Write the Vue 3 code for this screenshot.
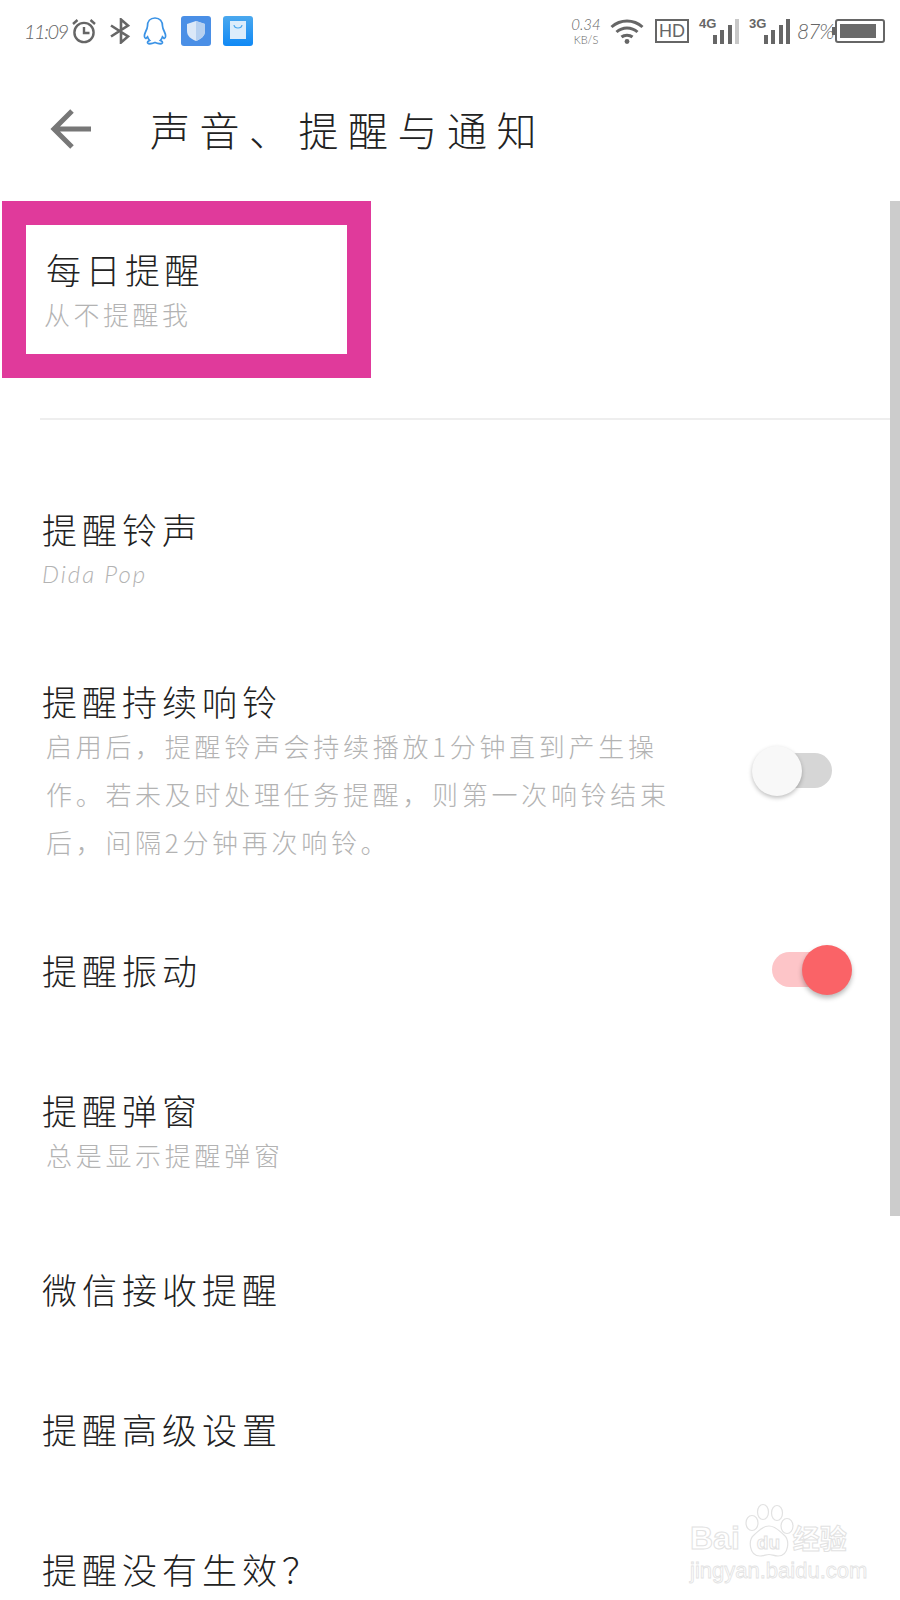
<script setup>
const descLines = [
  '启用后，提醒铃声会持续播放1分钟直到产生操',
  '作。若未及时处理任务提醒，则第一次响铃结束',
  '后，间隔2分钟再次响铃。'
]
</script>

<template>
  <div class="page">
    <header class="status">
      <div class="status-left">
        <span class="time">11:09</span>
        <svg class="i-alarm" width="26" height="26" viewBox="0 0 26 26" fill="none" stroke="#666" stroke-width="2.4">
          <circle cx="13" cy="14.5" r="9.6" />
          <path d="M13 9v6h5.5M2 6l4.5-4M24 6l-4.5-4" />
        </svg>
        <svg class="i-bt" width="21" height="26" viewBox="0 0 21 26" fill="none" stroke="#666" stroke-width="2.6">
          <path d="M1 7.5l17 11-7 6V1.500l7 6-17 11" />
        </svg>
        <svg class="i-qq" width="26" height="30" viewBox="0 0 26 30" fill="none" stroke="#3b93e6" stroke-width="1.7">
          <path d="M13 2c-5 0-7.500 3.500-7.500 8 0 2-.5 3-2 6-1.500 3-1.500 6 .3 6.500l1.700-1.700c.4 1.500 1.200 2.700 2.200 3.700-1.700.6-2.500 1.500-2 2.500.7 1 4 .9 7.300-.5 3.300 1.400 6.600 1.500 7.300.5.500-1-.3-1.900-2-2.500 1-1 1.800-2.200 2.200-3.700l1.700 1.700c1.800-.5 1.800-3.500.3-6.500-1.500-3-2-4-2-6 0-4.500-2.500-8-7.500-8z" />
        </svg>
        <svg class="i-tile" width="30" height="30" viewBox="0 0 30 30">
          <rect width="30" height="30" rx="3" fill="#4a8fe6" />
          <path d="M15 5l9 3v7c0 5-4 8-9 10-5-2-9-5-9-10V8z" fill="#dbe8f8" />
          <path d="M15 5l9 3v7c0 5-4 8-9 10z" fill="#b6d0f0" />
        </svg>
        <svg class="i-tile" width="30" height="30" viewBox="0 0 30 30">
          <defs>
            <linearGradient id="bagBg" x1="0" y1="0" x2="0" y2="1">
              <stop offset="0" stop-color="#4aa8ee" />
              <stop offset="1" stop-color="#1089f5" />
            </linearGradient>
          </defs>
          <rect width="30" height="30" rx="3" fill="url(#bagBg)" />
          <path d="M7 5h16v18H7z" fill="#dcedfb" />
          <path d="M11 9c.5 4 7.500 4 8 0" fill="none" stroke="#4aa8ee" stroke-width="1.200" />
        </svg>
      </div>
      <div class="status-right">
        <div class="speed"><span class="speed-a">0.34</span><span class="speed-b">KB/S</span></div>
        <svg class="i-wifi" width="34" height="25" viewBox="0 0 34 25" fill="none" stroke="#666" stroke-width="3">
          <path d="M1.500 8c9-8 22-8 31 0M6.500 13c6-5.500 15-5.500 21 0M11.500 18c3-2.500 8-2.500 11 0" />
          <circle cx="17" cy="22.500" r="2.400" fill="#666" stroke="none" />
        </svg>
        <span class="hd">HD</span>
        <div class="net">
          <span class="net-label">4G</span>
          <div class="bars">
            <i class="bar b1"></i><i class="bar b2"></i><i class="bar b3"></i><i class="bar b4 dim"></i>
          </div>
        </div>
        <div class="net net-3g">
          <span class="net-label">3G</span>
          <div class="bars">
            <i class="bar b1"></i><i class="bar b2"></i><i class="bar b3"></i><i class="bar b4"></i>
          </div>
        </div>
        <span class="pct">87%</span>
        <div class="battery"><div class="battery-fill"></div></div>
      </div>
    </header>

    <div class="toolbar">
      <svg width="42" height="42" viewBox="0 0 42 42" fill="none" stroke="#777" stroke-width="5">
        <path d="M41 21H4M22 3L4 21l18 18" />
      </svg>
      <h1 class="page-title">声音、提醒与通知</h1>
    </div>

    <main class="list">
      <section class="daily">
        <div class="row-text daily-text">
          <div class="title title-wide">每日提醒</div>
          <div class="sub sub-wide">从不提醒我</div>
        </div>
        <div class="highlight"></div>
        <div class="divider"></div>
      </section>

      <section class="row gap-ring">
        <div class="row-text">
          <div class="title">提醒铃声</div>
          <div class="sub latin">Dida Pop</div>
        </div>
      </section>

      <section class="row gap-keep">
        <div class="row-text">
          <div class="title">提醒持续响铃</div>
          <div v-for="line in descLines" :key="line" class="sub desc">{{ line }}</div>
        </div>
        <div class="toggle off"><div class="track"></div><div class="knob"></div></div>
      </section>

      <section class="row gap-vibrate">
        <div class="row-text">
          <div class="title">提醒振动</div>
        </div>
        <div class="toggle on"><div class="track"></div><div class="knob"></div></div>
      </section>

      <section class="row gap-popup">
        <div class="row-text">
          <div class="title">提醒弹窗</div>
          <div class="sub desc">总是显示提醒弹窗</div>
        </div>
      </section>

      <section class="row gap-wechat">
        <div class="title">微信接收提醒</div>
      </section>

      <section class="row gap-advanced">
        <div class="title">提醒高级设置</div>
      </section>

      <section class="row gap-help">
        <div class="title">提醒没有生效？</div>
      </section>

      <div class="scrollbar"></div>
    </main>

    <div class="watermark">
      <svg class="paw" width="50" height="56" viewBox="0 0 50 56" fill="#fff" stroke="#e2e2e2" stroke-width="1.200">
        <ellipse cx="7" cy="20" rx="6" ry="7.500" />
        <ellipse cx="18" cy="9" rx="5.500" ry="7.500" />
        <ellipse cx="32" cy="10" rx="5.500" ry="7.500" />
        <ellipse cx="42" cy="23" rx="6" ry="7.500" />
        <path d="M24 23c7 0 10 5 15 9 6 5 5 21-6 21-4 0-6-1.500-9-1.500s-5 1.500-9 1.500C4 53 3 37 9 32c5-4 8-9 15-9z" />
      </svg>
      <div class="wm-main"><span>Bai</span><span class="wm-du">du</span><span class="wm-cn">经验</span></div>
      <div class="wm-url">jingyan.baidu.com</div>
    </div>
  </div>
</template>

<style scoped>
.page {
  position: relative;
  width: 900px;
  height: 1600px;
  overflow: hidden;
  background: #fff;
  font-family: "Noto Sans CJK SC", "Noto Sans", sans-serif;
  color: #222;
}

/* status bar */
.status {
  height: 62px;
  display: flex;
  justify-content: space-between;
  align-items: center;
  padding: 0 15px 0 24px;
  box-sizing: border-box;
}
.status-left,
.status-right {
  display: flex;
  align-items: center;
}
.time {
  font-family: Lato, sans-serif;
  font-size: 20px;
  font-weight: 300;
  font-style: italic;
  letter-spacing: -1.500px;
  color: #666;
  width: 47px;
  white-space: nowrap;
}
.i-bt { margin-left: 13px; }
.i-qq { margin-left: 11px; }
.i-tile { margin-left: 13px; }
.i-tile + .i-tile { margin-left: 12px; }
.speed {
  display: flex;
  flex-direction: column;
  align-items: center;
  width: 30px;
  font-family: Lato, sans-serif;
  color: #666;
  font-weight: 300;
}
.speed-a { font-size: 15px; line-height: 17px; font-style: italic; }
.speed-b { font-size: 11px; line-height: 13px; }
.i-wifi { margin-left: 9px; }
.hd {
  margin-left: 11px;
  width: 34px;
  height: 24px;
  box-sizing: border-box;
  border: 2px solid #666;
  font: 400 18px/20px "Liberation Sans", sans-serif;
  color: #666;
  text-align: center;
}
.net {
  position: relative;
  margin-left: 10px;
  width: 40px;
  height: 25px;
}
.net-3g { width: 41px; }
.net-label {
  position: absolute;
  left: 0;
  top: -2px;
  font: 700 13px/14px "Liberation Sans", sans-serif;
  color: #666;
}
.bars {
  position: absolute;
  right: 0;
  bottom: 0;
  display: flex;
  align-items: flex-end;
  gap: 3.500px;
}
.bar { display: block; width: 4px; background: #666; }
.b1 { height: 9px; }
.b2 { height: 14px; }
.b3 { height: 19px; }
.b4 { height: 25px; }
.dim { background: #c8c8c8; }
.pct {
  margin-left: 7px;
  font: italic 300 21px/26px Lato, sans-serif;
  letter-spacing: -1px;
  color: #666;
  width: 38px;
  white-space: nowrap;
}
.battery {
  position: relative;
  width: 50px;
  height: 24px;
  box-sizing: border-box;
  border: 2px solid #666;
  border-radius: 3px;
  padding: 3px;
}
.battery::before {
  content: "";
  position: absolute;
  left: -5px;
  top: 6px;
  width: 3px;
  height: 8px;
  background: #666;
}
.battery-fill { height: 100%; width: 90%; background: #6a6a6a; }

/* toolbar */
.toolbar {
  height: 139px;
  display: flex;
  align-items: center;
  padding-left: 50px;
  padding-bottom: 6px;
  box-sizing: border-box;
}
.page-title {
  margin: 0 0 0 58px;
  font-size: 40px;
  font-weight: 300;
  letter-spacing: 9.500px;
  line-height: 56px;
  color: #222;
  white-space: nowrap;
}

/* list */
.list { position: relative; }
.daily {
  position: relative;
  height: 219px;
  padding-top: 45px;
  box-sizing: border-box;
}
.highlight {
  position: absolute;
  left: 2px;
  top: 0;
  width: 369px;
  height: 177px;
  box-sizing: border-box;
  border: 24px solid #e03a9b;
}
.divider {
  position: absolute;
  left: 40px;
  right: 10px;
  bottom: 0;
  height: 2px;
  background: #eeeeee;
}
.row {
  display: flex;
  justify-content: space-between;
  align-items: center;
  padding: 0 48px 0 42px;
}
.daily-text { padding-left: 46px; }
.gap-ring { margin-top: 86px; }
.gap-keep { margin-top: 80px; }
.gap-vibrate { margin-top: 79px; }
.gap-popup { margin-top: 92px; }
.gap-wechat { margin-top: 87px; }
.gap-advanced { margin-top: 94px; }
.gap-help { margin-top: 94px; }

.title {
  font-size: 35px;
  line-height: 46px;
  font-weight: 300;
  letter-spacing: 5px;
  color: #222;
  white-space: nowrap;
}
.title-wide { letter-spacing: 4.500px; }
.sub {
  margin-top: -2px;
  font-size: 26px;
  line-height: 48px;
  font-weight: 300;
  letter-spacing: 3.700px;
  color: #b3b3b3;
  white-space: nowrap;
}
.sub-wide { margin-left: -2px; font-size: 26px; letter-spacing: 3.500px; }
.latin {
  font-family: Lato, sans-serif;
  font-style: italic;
  font-size: 24px;
  letter-spacing: 2px;
}
.desc { padding-left: 4px; }
.desc + .desc { margin-top: 0; }

/* toggles */
.toggle {
  position: relative;
  width: 100px;
  height: 50px;
  flex: none;
}
.track {
  position: absolute;
  left: 20px;
  top: 7px;
  width: 60px;
  height: 35px;
  border-radius: 18px;
}
.knob {
  position: absolute;
  top: 0;
  width: 50px;
  height: 50px;
  border-radius: 50%;
}
.off { margin-bottom: 2px; }
.off .track { background: #d6d6d6; }
.off .knob {
  left: 0;
  background: #f8f8f8;
  box-shadow: 0 2px 4px rgba(0, 0, 0, 0.25);
}
.on .track { background: #fdc5c8; }
.on .knob {
  left: 50px;
  background: #fa6367;
  box-shadow: 0 3px 5px rgba(0, 0, 0, 0.28);
}

.scrollbar {
  position: absolute;
  right: 0;
  top: 0;
  width: 10px;
  height: 1015px;
  background: #cccccc;
}

/* watermark */
.watermark {
  position: absolute;
  left: 690px;
  top: 1500px;
  width: 170px;
  height: 90px;
}
.paw { position: absolute; left: 55px; top: 3px; }
.wm-main {
  position: absolute;
  left: 0;
  top: 18px;
  display: flex;
  align-items: baseline;
  font: 700 32px/40px "Liberation Sans", sans-serif;
  color: #fff;
  -webkit-text-stroke: 1px #e2e2e2;
  white-space: nowrap;
}
.wm-du { font-size: 19px; margin-left: 17px; width: 36px; }
.wm-cn { font-family: "Noto Sans CJK SC", sans-serif; font-size: 27px; }
.wm-url {
  position: absolute;
  left: 0;
  top: 58px;
  font: 400 22px/26px "Liberation Sans", sans-serif;
  color: #fff;
  -webkit-text-stroke: 0.8px #e2e2e2;
  white-space: nowrap;
}
</style>
